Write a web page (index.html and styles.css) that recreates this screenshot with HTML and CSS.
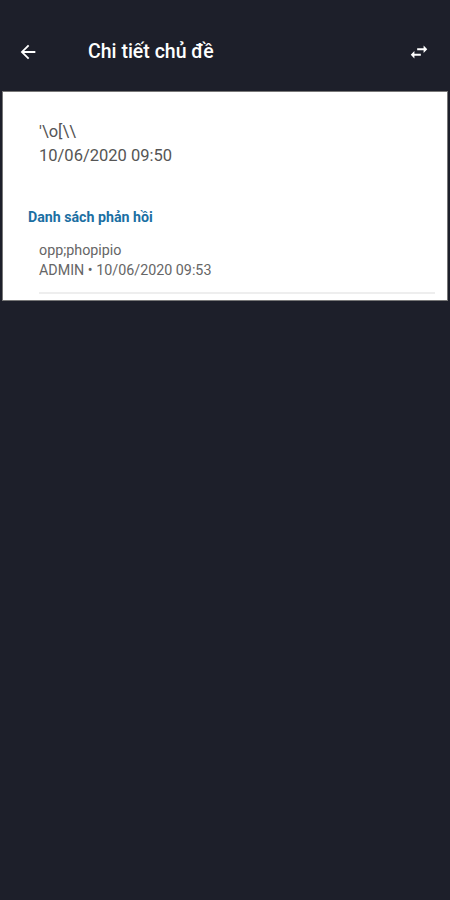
FILE: index.html
```html
<html lang="vi">
<head>
	<meta charset="utf-8">
	<meta name="viewport" content="width=device-width, initial-scale=1.0" />
	<title>Chi tiết chủ đề</title>

	<link rel="stylesheet" href="styles.css">
</head>
<body>
	<header class="bar">
		<svg class="icon" viewBox="0 0 24 24" width="22" height="22"><path d="M20 11H7.83l5.59-5.59L12 4l-8 8 8 8 1.41-1.41L7.83 13H20v-2z" fill="#fff"/></svg>
		<h1 class="title">Chi tiết chủ đề</h1>
		<svg class="icon swap" viewBox="0 0 24 24" width="22" height="22"><path d="M6.99 11L3 15l3.99 4v-3H14v-2H6.99v-3zM21 9l-3.99-4v3H10v2h7.01v3L21 9z" fill="#fff"/></svg>
	</header>

	<section class="card">
		<div class="topic">
			<p class="topic-text">'\o[\\</p>
			<p class="topic-date">10/06/2020 09:50</p>
		</div>

		<h2 class="label">Danh sách phản hồi</h2>

		<div class="reply">
			<p class="reply-text">opp;phopipio</p>
			<p class="reply-meta">ADMIN • 10/06/2020 09:53</p>
		</div>
	</section>
</body>
</html>
```

FILE: styles.css
```css
html {
	font: 14px/1.4 Roboto, "Noto Sans", sans-serif;
}

body {
	margin: 0;
	min-height: 900px;
	background: #1d1f2a;
}

p, h1, h2 {
	margin: 0;
}

.bar {
	display: flex;
	align-items: center;
	height: 50px;
	padding: 27px 20px 14px 17px;
}

.icon {
	flex: none;
}

.title {
	flex: 1;
	margin-left: 49px;
	color: #fff;
	font-size: 19.5px;
	font-weight: 500;
}

.card {
	margin: 0 2px;
	padding: 28px 12px 6px 25px;
	background: #fff;
	border: 1px solid #777;
}

.topic {
	padding-left: 11px;
	color: #555;
	font-size: 16.5px;
	line-height: 24px;
}

.label {
	margin-top: 40px;
	color: #1b6fa3;
	font-size: 14.2px;
	font-weight: 700;
	line-height: 18px;
}

.reply {
	margin-top: 14px;
	margin-left: 11px;
	padding-bottom: 12px;
	border-bottom: 2px solid #eee;
	color: #666;
	font-size: 14.3px;
	line-height: 20px;
}
```
